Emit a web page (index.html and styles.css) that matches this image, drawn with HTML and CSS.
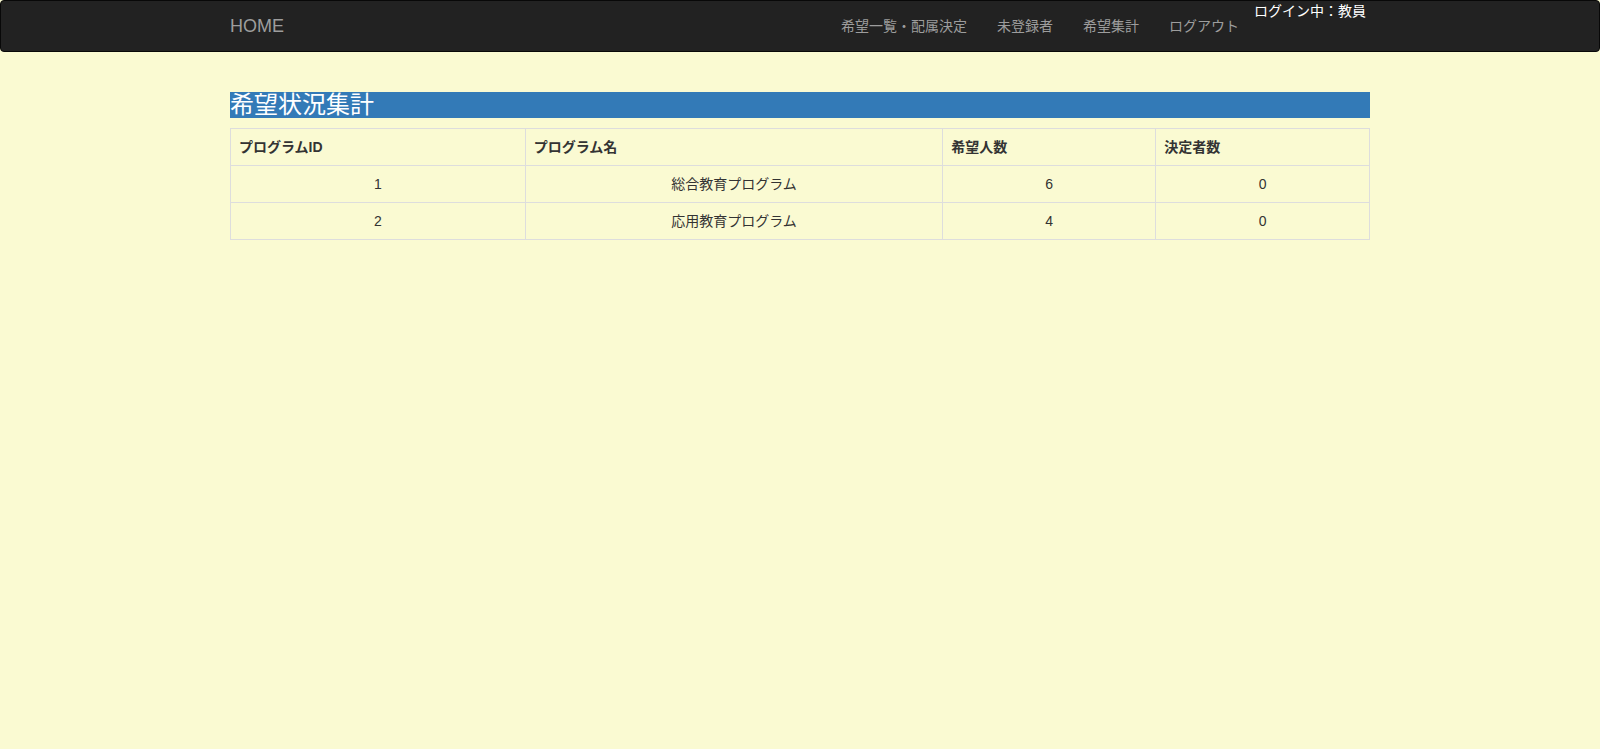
FILE: index.html
```html
<!DOCTYPE html>
<html lang="ja">
<head>
<meta charset="utf-8">
<title>希望状況集計</title>
<link rel="stylesheet" href="styles.css">
</head>
<body>
<nav class="navbar">
  <div class="container nav-inner">
    <a class="brand" href="#">HOME</a>
    <div class="nav-right">
      <ul class="nav-links">
        <li><a href="#">希望一覧・配属決定</a></li>
        <li><a href="#">未登録者</a></li>
        <li><a href="#">希望集計</a></li>
        <li><a href="#">ログアウト</a></li>
      </ul>
      <span class="login">ログイン中：教員</span>
    </div>
  </div>
</nav>
<main class="container main">
  <h3 class="title">希望状況集計</h3>
  <table class="summary">
    <colgroup>
      <col class="c1"><col class="c2"><col class="c3"><col class="c4">
    </colgroup>
    <thead>
      <tr><th>プログラムID</th><th>プログラム名</th><th>希望人数</th><th>決定者数</th></tr>
    </thead>
    <tbody>
      <tr><td>1</td><td>総合教育プログラム</td><td>6</td><td>0</td></tr>
      <tr><td>2</td><td>応用教育プログラム</td><td>4</td><td>0</td></tr>
    </tbody>
  </table>
</main>
</body>
</html>
```
FILE: styles.css
```css
* { box-sizing: border-box; }
html, body { margin: 0; padding: 0; }
body {
  background: #fafad2;
  font-family: "Liberation Sans", Arial, "Noto Sans CJK JP", sans-serif;
  font-size: 14px;
  line-height: 20px;
  color: #333;
}
.container {
  width: 1170px;
  margin: 0 auto;
  padding: 0 15px;
}
.navbar {
  background: #222;
  border: 1px solid #080808;
  border-radius: 4px;
  height: 52px;
  margin-bottom: 20px;
}
.nav-inner {
  display: flex;
  justify-content: space-between;
  align-items: flex-start;
  height: 50px;
}
.brand {
  display: block;
  font-size: 18px;
  line-height: 20px;
  padding: 15px 0;
  color: #9d9d9d;
  text-decoration: none;
}
.nav-right {
  display: flex;
  align-items: flex-start;
  padding-right: 4px;
}
.nav-links {
  display: flex;
  list-style: none;
  margin: 0;
  padding: 0;
}
.nav-links a {
  display: block;
  padding: 15px;
  line-height: 20px;
  color: #9d9d9d;
  text-decoration: none;
}
.login {
  color: #fff;
  line-height: 20px;
}
.main {
  padding-top: 20px;
}
.title {
  margin: 0 0 10px;
  background: #337ab7;
  color: #fff;
  font-size: 24px;
  font-weight: 400;
  line-height: 26px;
  height: 26px;
  overflow: hidden;
}
.summary {
  width: 100%;
  border-collapse: collapse;
  border: 1px solid #ddd;
}
.c1 { width: 295px; }
.c2 { width: 418px; }
.c3 { width: 213px; }
.c4 { width: 214px; }
.summary th, .summary td {
  border: 1px solid #ddd;
  padding: 8px;
  line-height: 20px;
}
.summary th {
  text-align: left;
  font-weight: bold;
}
.summary td {
  text-align: center;
}
```
